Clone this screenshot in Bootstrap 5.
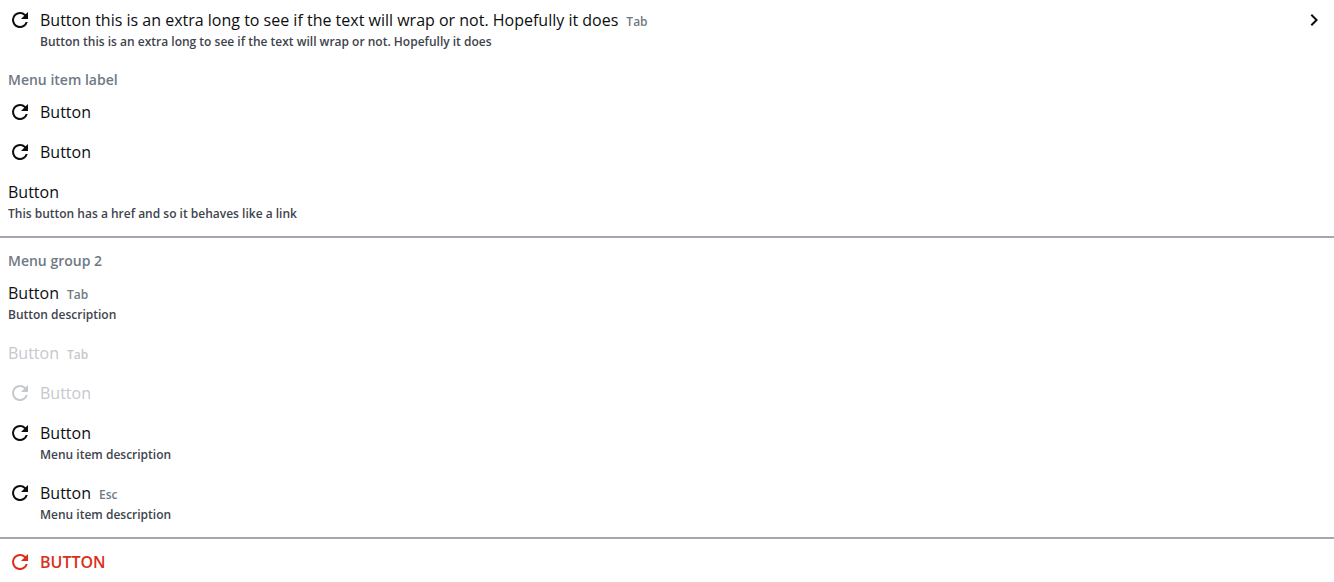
<!DOCTYPE html>
<html lang="en">
<head>
<meta charset="utf-8">
<meta name="viewport" content="width=device-width, initial-scale=1">
<title>Menu</title>
<link href="https://cdn.jsdelivr.net/npm/bootstrap@5.3.0/dist/css/bootstrap.min.css" rel="stylesheet">
<style>
body { font-family: "Open Sans", "Noto Sans", sans-serif; color: #0d0e10; background: #fff; }
.menu-item { text-rendering: optimizeSpeed; display: flex; align-items: flex-start; gap: 8px; width: 100%; padding: 8px; border: 0; background: transparent; color: #0d0e10; text-align: left; text-decoration: none; font-size: 16px; line-height: 24px; }
.menu-item:disabled { color: #c5c8ce; }
.menu-item svg { width: 24px; height: 24px; fill: currentColor; }
.menu-key { font-size: 12px; font-weight: 600; line-height: 16px; color: #6f7985; }
.menu-item:disabled .menu-key { color: inherit; }
.menu-note { font-size: 12px; font-weight: 600; line-height: 20px; color: #40444d; }
.menu-label { padding: 8px 8px 0; font-size: 14px; font-weight: 600; line-height: 24px; color: #6f7985; }
.menu-rule { height: 2px; margin: 4px 0 3px; border: 0; background: #a2a8ae; opacity: 1; }
.menu-danger { color: #d9301a; font-weight: 600; }
</style>
</head>
<body>
<svg class="d-none" aria-hidden="true">
<symbol id="refresh" viewBox="0 0 24 24"><path d="M17.65 6.35A7.96 7.96 0 0 0 12 4a8 8 0 1 0 7.73 10h-2.08A6 6 0 1 1 12 6c1.66 0 3.14.69 4.22 1.78L13 11h7V4z"/></symbol>
<symbol id="chevron" viewBox="0 0 24 24"><path d="M10 6 8.590 7.410 13.170 12l-4.580 4.590L10 18l6-6z"/></symbol>
</svg>
<main>
<button type="button" class="menu-item">
<svg class="flex-shrink-0" aria-hidden="true"><use href="#refresh"/></svg>
<span class="flex-grow-1"><span class="d-flex align-items-baseline gap-2">Button this is an extra long to see if the text will wrap or not. Hopefully it does <span class="menu-key">Tab</span></span><span class="menu-note d-block">Button this is an extra long to see if the text will wrap or not. Hopefully it does</span></span>
<svg class="flex-shrink-0" aria-hidden="true"><use href="#chevron"/></svg>
</button>
<div class="menu-label">Menu item label</div>
<button type="button" class="menu-item"><svg aria-hidden="true"><use href="#refresh"/></svg><span>Button</span></button>
<button type="button" class="menu-item"><svg aria-hidden="true"><use href="#refresh"/></svg><span>Button</span></button>
<a href="#" class="menu-item"><span>Button<span class="menu-note d-block">This button has a href and so it behaves like a link</span></span></a>
<hr class="menu-rule">
<div class="menu-label">Menu group 2</div>
<button type="button" class="menu-item"><span><span class="d-flex align-items-baseline gap-2">Button <span class="menu-key">Tab</span></span><span class="menu-note d-block">Button description</span></span></button>
<button type="button" class="menu-item" disabled><span class="d-flex align-items-baseline gap-2">Button <span class="menu-key">Tab</span></span></button>
<button type="button" class="menu-item" disabled><svg aria-hidden="true"><use href="#refresh"/></svg><span>Button</span></button>
<button type="button" class="menu-item"><svg aria-hidden="true"><use href="#refresh"/></svg><span>Button<span class="menu-note d-block">Menu item description</span></span></button>
<button type="button" class="menu-item"><svg aria-hidden="true"><use href="#refresh"/></svg><span><span class="d-flex align-items-baseline gap-2">Button <span class="menu-key">Esc</span></span><span class="menu-note d-block">Menu item description</span></span></button>
<hr class="menu-rule">
<button type="button" class="menu-item menu-danger"><svg aria-hidden="true"><use href="#refresh"/></svg><span class="text-uppercase">Button</span></button>
</main>
<script src="https://cdn.jsdelivr.net/npm/bootstrap@5.3.0/dist/js/bootstrap.bundle.min.js"></script>
</body>
</html>
